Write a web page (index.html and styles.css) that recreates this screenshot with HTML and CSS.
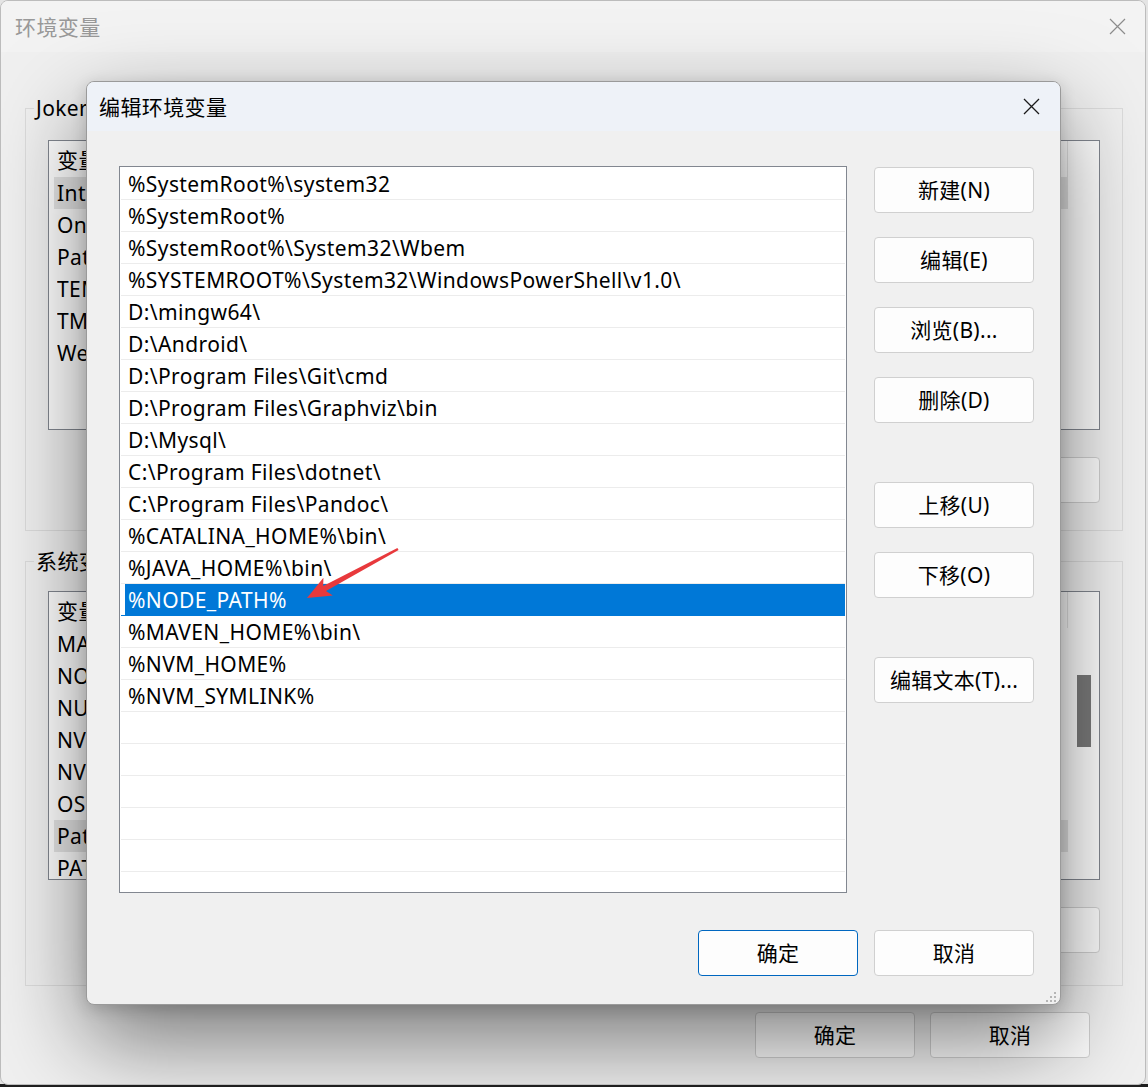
FILE: index.html
```html
<!DOCTYPE html>
<html lang="zh-CN">
<head>
<meta charset="utf-8">
<title>环境变量</title>
<link rel="stylesheet" href="styles.css">
</head>
<body>
<div class="screen">
  <div class="win">
    <div class="win-title">
      <span class="win-title-text">环境变量</span>
      <span class="win-close">
        <svg width="17" height="17" viewBox="0 0 17 17"><path d="M1 1L16 16M16 1L1 16" stroke="#8c8c8c" stroke-width="1.2" fill="none"/></svg>
      </span>
    </div>
    <div class="win-body">
      <fieldset class="group g1">
        <legend>Joker 的用户变量(U)</legend>
        <div class="vlist l1">
          <div class="vcontent">
            <div class="vhead"><span class="c1">变量</span><span class="c2">值</span></div>
            <div class="vrow sel-grey"><span class="c1">IntelliJ IDEA Community Edition</span><span class="c2">D:\IntelliJ IDEA\bin;</span></div>
            <div class="vrow"><span class="c1">OneDrive</span><span class="c2">C:\Users\Joker\OneDrive</span></div>
            <div class="vrow"><span class="c1">Path</span><span class="c2">%USERPROFILE%\AppData\Local\Microsoft\WindowsApps;</span></div>
            <div class="vrow"><span class="c1">TEMP</span><span class="c2">%USERPROFILE%\AppData\Local\Temp</span></div>
            <div class="vrow"><span class="c1">TMP</span><span class="c2">%USERPROFILE%\AppData\Local\Temp</span></div>
            <div class="vrow"><span class="c1">WebStorm</span><span class="c2">D:\WebStorm\bin;</span></div>
          </div>
          <div class="vscroll"></div>
        </div>
        <div class="btnrow">
          <button class="btn">新建(N)...</button>
          <button class="btn">编辑(E)...</button>
          <button class="btn">删除(D)</button>
        </div>
      </fieldset>
      <fieldset class="group g2">
        <legend>系统变量(S)</legend>
        <div class="vlist l2">
          <div class="vcontent">
            <div class="vhead"><span class="c1">变量</span><span class="c2">值</span></div>
            <div class="vrow"><span class="c1">MAVEN_HOME</span><span class="c2">D:\apache-maven</span></div>
            <div class="vrow"><span class="c1">NODE_PATH</span><span class="c2">D:\nodejs\node_global\node_modules</span></div>
            <div class="vrow"><span class="c1">NUMBER_OF_PROCESSORS</span><span class="c2">16</span></div>
            <div class="vrow"><span class="c1">NVM_HOME</span><span class="c2">D:\nvm</span></div>
            <div class="vrow"><span class="c1">NVM_SYMLINK</span><span class="c2">D:\nodejs</span></div>
            <div class="vrow"><span class="c1">OS</span><span class="c2">Windows_NT</span></div>
            <div class="vrow sel-grey"><span class="c1">Path</span><span class="c2">%SystemRoot%\system32;%SystemRoot%;</span></div>
            <div class="vrow"><span class="c1">PATHEXT</span><span class="c2">.COM;.EXE;.BAT;.CMD;.VBS;.VBE;.JS</span></div>
          </div>
          <div class="vscroll"><div class="vthumb"></div></div>
        </div>
        <div class="btnrow">
          <button class="btn">新建(W)...</button>
          <button class="btn">编辑(I)...</button>
          <button class="btn">删除(L)</button>
        </div>
      </fieldset>
      <div class="win-foot">
        <button class="btn">确定</button>
        <button class="btn">取消</button>
      </div>
    </div>

    <div class="dlg">
      <div class="dlg-title">
        <span class="dlg-title-text">编辑环境变量</span>
        <span class="dlg-close">
          <svg width="17" height="17" viewBox="0 0 17 17"><path d="M1 1L16 16M16 1L1 16" stroke="#1a1a1a" stroke-width="1.3" fill="none"/></svg>
        </span>
      </div>
      <div class="dlg-body">
        <div class="plist">
          <div class="prow">%SystemRoot%\system32</div>
          <div class="prow">%SystemRoot%</div>
          <div class="prow">%SystemRoot%\System32\Wbem</div>
          <div class="prow">%SYSTEMROOT%\System32\WindowsPowerShell\v1.0\</div>
          <div class="prow">D:\mingw64\</div>
          <div class="prow">D:\Android\</div>
          <div class="prow">D:\Program Files\Git\cmd</div>
          <div class="prow">D:\Program Files\Graphviz\bin</div>
          <div class="prow">D:\Mysql\</div>
          <div class="prow">C:\Program Files\dotnet\</div>
          <div class="prow">C:\Program Files\Pandoc\</div>
          <div class="prow">%CATALINA_HOME%\bin\</div>
          <div class="prow">%JAVA_HOME%\bin\</div>
          <div class="prow sel">%NODE_PATH%</div>
          <div class="prow">%MAVEN_HOME%\bin\</div>
          <div class="prow">%NVM_HOME%</div>
          <div class="prow">%NVM_SYMLINK%</div>
          <div class="prow"></div>
          <div class="prow"></div>
          <div class="prow"></div>
          <div class="prow"></div>
          <div class="prow"></div>
          <div class="prow"></div>
        </div>
        <div class="pbtns">
          <div class="pgroup">
            <button class="btn">新建(N)</button>
            <button class="btn">编辑(E)</button>
            <button class="btn">浏览(B)...</button>
            <button class="btn">删除(D)</button>
          </div>
          <div class="pgroup">
            <button class="btn">上移(U)</button>
            <button class="btn">下移(O)</button>
          </div>
          <div class="pgroup">
            <button class="btn">编辑文本(T)...</button>
          </div>
        </div>
      </div>
      <div class="dlg-foot">
        <button class="btn btn-default">确定</button>
        <button class="btn">取消</button>
      </div>
      <svg class="grip" width="12" height="12" viewBox="0 0 12 12">
        <rect x="9" y="1" width="2" height="2" fill="#b5b5b5"/>
        <rect x="5" y="5" width="2" height="2" fill="#b5b5b5"/>
        <rect x="9" y="5" width="2" height="2" fill="#b5b5b5"/>
        <rect x="1" y="9" width="2" height="2" fill="#b5b5b5"/>
        <rect x="5" y="9" width="2" height="2" fill="#b5b5b5"/>
        <rect x="9" y="9" width="2" height="2" fill="#b5b5b5"/>
      </svg>
    </div>
  </div>

  <svg class="arrow" width="1148" height="1087" viewBox="0 0 1148 1087">
    <polygon fill="#e8393c" points="307,598 323.4,577.8 323.2,585.9 397.4,547.9 398.6,550.1 326,591.1 332.8,595.4"/>
  </svg>
</div>
</body>
</html>
```

FILE: styles.css
```css
html, body {
  margin: 0;
  padding: 0;
}

body {
  width: 1148px;
  height: 1087px;
  overflow: hidden;
  background: linear-gradient(to top, #1f1f1f 3px, #e4e4e4 3px);
  font-family: "Noto Sans", "Noto Sans CJK SC", sans-serif;
  font-size: 21px;
  letter-spacing: 0.4px;
  color: #000;
}

.screen {
  position: relative;
  width: 1148px;
  height: 1087px;
}

.win {
  position: relative;
  box-sizing: border-box;
  width: 1146px;
  height: 1085px;
  background: #f0f0f0;
  border: 1px solid #bcbcbc;
  border-radius: 8px;
  overflow: hidden;
}

.win-title {
  height: 51px;
  background: #f3f3f3;
  display: flex;
  align-items: center;
  padding-left: 14px;
}

.win-title-text {
  color: #999;
  line-height: 28px;
}

.win-close {
  margin-left: auto;
  width: 56px;
  display: flex;
  justify-content: center;
  align-items: center;
}

.group {
  margin: 0 22px 0 24px;
  border: 1px solid #dcdcdc;
  padding: 18px 22px 27px 22px;
  min-width: 0;
}

.group legend {
  margin-left: -14px;
  padding: 0 2px;
  line-height: 28px;
}

.g1 {
  margin-top: 42px;
}

.g2 {
  margin-top: 16px;
  padding-top: 16px;
  padding-bottom: 32px;
}

.vlist {
  display: flex;
  background: #fff;
  border: 1px solid #828790;
  overflow: hidden;
}

.l1 { height: 288px; }
.l2 { height: 287px; }

.vcontent {
  flex: 1;
  min-width: 0;
}

.vscroll {
  width: 31px;
  flex: none;
}

.vthumb {
  margin: 83px 0 0 9px;
  width: 14px;
  height: 72px;
  background: #7b7b7b;
}

.vhead {
  display: flex;
  height: 36px;
  align-items: center;
  padding-left: 8px;
  border-right: 1px solid #e5e5e5;
}

.vrow {
  display: flex;
  height: 32px;
  align-items: center;
  margin-left: 5px;
  padding-left: 3px;
  white-space: nowrap;
}

.c1 {
  width: 340px;
  flex: none;
  overflow: hidden;
  white-space: nowrap;
}

.c2 {
  flex: 1;
  overflow: hidden;
  white-space: nowrap;
}

.sel-grey {
  background: #e5e5e5;
}

.btnrow {
  display: flex;
  justify-content: flex-end;
  gap: 16px;
  margin-top: 27px;
}

.btn {
  box-sizing: border-box;
  width: 160px;
  height: 46px;
  padding: 0;
  background: #fdfdfd;
  border: 1px solid #d0d0d0;
  border-radius: 4px;
  font-family: "Noto Sans", "Noto Sans CJK SC", sans-serif;
  font-size: 21px;
  letter-spacing: 0.3px;
  color: #000;
  line-height: 28px;
}

.win-foot {
  display: flex;
  justify-content: flex-end;
  gap: 15px;
  margin-top: 26px;
  padding-right: 55px;
}

/* edit dialog */
.dlg {
  position: absolute;
  left: 85px;
  top: 80px;
  box-sizing: border-box;
  width: 975px;
  height: 924px;
  background: #f0f0f0;
  border: 1px solid #9a9a9a;
  border-radius: 8px;
  overflow: hidden;
  box-shadow: 0 4px 16px rgba(0, 0, 0, 0.16), 0 36px 90px rgba(0, 0, 0, 0.5);
}

.dlg-title {
  height: 49px;
  background: #eef2f8;
  display: flex;
  align-items: center;
  padding-left: 12px;
}

.dlg-title-text {
  line-height: 28px;
}

.dlg-close {
  margin-left: auto;
  width: 58px;
  display: flex;
  justify-content: center;
  align-items: center;
}

.dlg-body {
  display: grid;
  grid-template-columns: 728px 160px;
  column-gap: 27px;
  padding: 35px 0 0 32px;
}

.plist {
  box-sizing: border-box;
  height: 727px;
  background: #fff;
  border: 1px solid #828790;
  padding: 1px;
  overflow: hidden;
}

.prow {
  height: 31px;
  line-height: 32px;
  border-bottom: 1px solid #ececec;
  padding-left: 7px;
  white-space: nowrap;
}

.prow.sel {
  background: linear-gradient(to right, transparent 4px, #0078d7 4px);
  color: #fff;
  border-bottom-color: #0078d7;
}

.pbtns {
  display: flex;
  flex-direction: column;
  gap: 59px;
  padding-top: 1px;
}

.pgroup {
  display: flex;
  flex-direction: column;
  gap: 24px;
}

.dlg-foot {
  display: flex;
  justify-content: flex-end;
  gap: 16px;
  margin-top: 37px;
  padding-right: 26px;
}

.btn-default {
  border-color: #0067c0;
}

.grip {
  position: absolute;
  right: 3px;
  bottom: 1px;
}

.arrow {
  position: absolute;
  left: 0;
  top: 0;
  pointer-events: none;
}
```
